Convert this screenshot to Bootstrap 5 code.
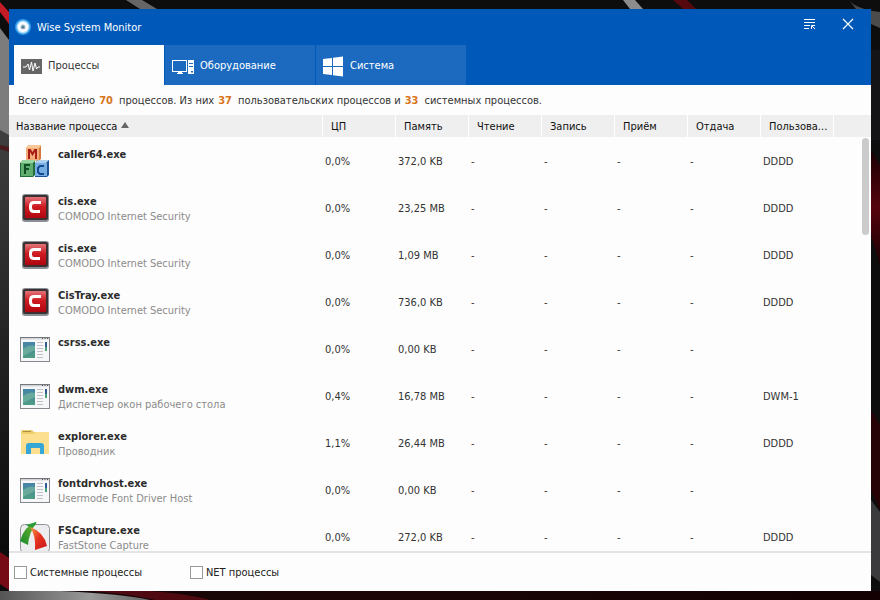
<!DOCTYPE html>
<html lang="ru">
<head>
<meta charset="utf-8">
<meta name="viewport" content="width=device-width, initial-scale=1">
<title>Wise System Monitor</title>
<link href="https://cdn.jsdelivr.net/npm/bootstrap@5.3.0/dist/css/bootstrap.min.css" rel="stylesheet">
<style>
  body { font: 11px/15px "DejaVu Sans Condensed", "Noto Sans", sans-serif; color: #333; background: #0c0c0d; }
  .backdrop { z-index: -1; }
  .desk { padding: 9px; }
  .win { background: #fdfdfd; }
  .titlebar { background: #0059b8; color: #fff; }
  .caption { height: 36px; padding: 0 15px 0 6px; gap: 6px; }
  .caption h1 { font-size: 11px; line-height: 15px; }
  .tool { border: 0; background: none; color: #fff; padding: 0 0 6px; width: 16px; line-height: 0; }
  .tabs { padding-left: 5px; gap: 1px; }
  .tab { width: 150px; height: 40px; border: 0; padding: 0 7px; gap: 6px; background: #1b6abf; color: #fff; text-align: left; }
  .tab.active { background: #fdfdfd; color: #333; }
  .tab svg { margin-top: 3px; }
  .summary { height: 30px; padding: 0 9px; }
  .summary b { color: #d8751c; margin: 0 2px 0 4px; }
  .listing { flex: 1 1 0; min-height: 0; }
  .proc { table-layout: fixed; border-collapse: separate; border-spacing: 0; }
  .proc th { height: 22px; padding: 0 6px 0 8px; background: #efefef; color: #111; font-weight: 400; border-right: 1px solid #fff; }
  .proc th:last-child { border-right: 0; }
  .proc .first { padding-left: 7px; }
  .c-val { width: 73px; }
  .c-end { width: 37px; }
  .proc td { height: 47px; padding: 1px 2px 0; vertical-align: middle; white-space: nowrap; }
  .proc td.name { padding: 0 0 0 11px; vertical-align: top; }
  .entry { gap: 7px; }
  .entry svg { margin-top: 7px; flex: none; }
  .entry .labels { padding-top: 10px; }
  .entry b { color: #2b2b2b; font-size: 11px; }
  .entry span { color: #8b8b8b; }
  .thumb { top: 23px; right: 2px; width: 7px; height: 97px; border-radius: 4px; background: #cbcbcb; }
  .options { border-top: 2px solid #e4e4e4; height: 40px; padding: 0 5px; gap: 48px; color: #222; }
  .options label { padding-left: 3px; }
  .options .form-check-input { width: 13px; height: 13px; margin: 0; border: 1px solid #999; border-radius: 0; background-color: #fff; }
  .options .form-check-input:checked { background-color: #0059b8; }
</style>
<script src="https://cdn.jsdelivr.net/npm/bootstrap@5.3.0/dist/js/bootstrap.bundle.min.js"></script>
</head>
<body>
<svg class="backdrop position-fixed top-0 start-0 w-100 h-100" viewBox="0 0 880 600" preserveAspectRatio="none" aria-hidden="true">
  <defs>
    <linearGradient id="gl" x1="0" y1="0" x2="0" y2="1"><stop offset="0" stop-color="#404040"/><stop offset=".5" stop-color="#242424"/><stop offset="1" stop-color="#0b0b0b"/></linearGradient>
    <linearGradient id="gr" x1="0" y1="0" x2="0" y2="1"><stop offset="0" stop-color="#180003"/><stop offset=".5" stop-color="#55040d"/><stop offset="1" stop-color="#180003"/></linearGradient>
    <linearGradient id="gw" x1="0" y1="0" x2="1" y2="0"><stop offset="0" stop-color="#555"/><stop offset=".6" stop-color="#999"/><stop offset="1" stop-color="#666"/></linearGradient>
    <linearGradient id="gb" x1="0" y1="0" x2="1" y2="0"><stop offset="0" stop-color="#150406"/><stop offset=".4" stop-color="#1c0507"/><stop offset="1" stop-color="#120002"/></linearGradient>
    <linearGradient id="red" x1="0" y1="0" x2="0" y2="1"><stop offset="0" stop-color="#e2757a"/><stop offset=".45" stop-color="#cf1b22"/><stop offset="1" stop-color="#b00610"/></linearGradient>
    <linearGradient id="pic" x1="0" y1="0" x2="0" y2="1"><stop offset="0" stop-color="#4683ab"/><stop offset="1" stop-color="#4f9d82"/></linearGradient>
    <linearGradient id="green" x1="1" y1="0" x2="0" y2="1"><stop offset="0" stop-color="#7cb52c"/><stop offset="1" stop-color="#138a2c"/></linearGradient>
    <linearGradient id="flame" x1="0" y1="0" x2="1" y2="1"><stop offset="0" stop-color="#f79a4a"/><stop offset=".5" stop-color="#e5301e"/><stop offset="1" stop-color="#c7161b"/></linearGradient>
    <symbol id="i-mfc" viewBox="0 0 31 34">
      <path d="M6 4L9 1H21L21 15L18 17H6Z" fill="#d5763c"/><path d="M6 4L9 1H22L19 4Z" fill="#f7c797"/><rect x="6" y="4" width="13" height="13" fill="#f3ad78"/>
      <path d="M9 15V6H10L12.500 10L15 6H16V15" fill="none" stroke="#a71c17" stroke-width="2"/>
      <path d="M0 19L3 16H15V31L13 33H0Z" fill="#236c3c"/><path d="M0 19L3 16H16L13 19Z" fill="#97d5a0"/><rect x="1" y="19" width="12" height="13" fill="#5fae70"/>
      <path d="M5 30V21H10M5 25H9" fill="none" stroke="#114e25" stroke-width="2"/>
      <path d="M15 19L18 16H29V31L27 33H15Z" fill="#1d4f91"/><path d="M15 19L18 16H29L26 19Z" fill="#afd1f0"/><rect x="15" y="19" width="12" height="13" fill="#77aee2"/>
      <path d="M24 22H20L18 24V28L20 30H24" fill="none" stroke="#134a91" stroke-width="2"/>
    </symbol>
    <symbol id="i-comodo" viewBox="0 0 31 34">
      <rect x="2" y="3" width="27" height="28" rx="3" fill="#8b9097"/><rect x="3" y="4" width="25" height="25" rx="2" fill="#3c3032"/>
      <rect x="5" y="6" width="21" height="21" rx="1" fill="url(#red)"/>
      <path d="M21 11.500H14Q10.500 11.500 10.500 15V16.500Q10.500 20.500 14 20.500H20" fill="none" stroke="#fff" stroke-width="3"/>
    </symbol>
    <symbol id="i-app" viewBox="0 0 31 34">
      <rect x=".5" y="5.500" width="29" height="24" fill="#f6f7f8" stroke="#85888d"/><path d="M1 6.500H29" stroke="#d3d5d9" stroke-width="2"/><path d="M0 5.500H30" stroke="#74777c"/>
      <path d="M22 6.500H28" stroke="#555" stroke-dasharray="1 1.500"/>
      <rect x="3" y="10" width="12" height="16" fill="url(#pic)"/><path d="M3 17Q9 12 15 14V18Q9 21 3 24Z" fill="#76b5a0" opacity=".7"/>
      <path d="M17 10.500H23M17 13.500H23M17 16.500H23M17 19.500H23M17 22.500H23M17 25.500H23" stroke="#c3bfc8"/>
      <path d="M26 10V19" stroke="#2f5d93" stroke-width="2"/><path d="M26 15V19" stroke="#45a07b" stroke-width="2"/>
    </symbol>
    <symbol id="i-folder" viewBox="0 0 31 34">
      <path d="M1 5Q1 4 2 4H12L14 6H29V28H1Z" fill="#efce6c"/><path d="M1 8H14L16 6H29V28H1Z" fill="#fce090"/><path d="M3 5.500H11" stroke="#a9924f"/>
      <path d="M6 28V20Q6 17 9 17H21Q24 17 24 20V28H20V22H11V28Z" fill="#35a6d5"/>
    </symbol>
    <symbol id="i-fs" viewBox="0 0 31 34">
      <rect x=".5" y="4.500" width="29" height="28" rx="4" fill="#ededf0" stroke="#8f9297"/>
      <path d="M17 2Q4 6 0 21L8 25Q9 12 17 2Z" fill="url(#green)"/><path d="M10 7Q16 15 15 30L27 26Q24 12 10 7Z" fill="url(#flame)"/>
      <path d="M6 5Q10 8 13 7Q17 4 16 2Z" fill="#2d9b38"/>
    </symbol>
  </defs>
  <rect width="880" height="600" fill="#0d0d0e"/>
  <rect y="120" width="9" height="430" fill="url(#gl)"/>
  <path d="M0 28L9 40V135L0 130Z" fill="#7c7c7c"/>
  <path d="M0 2L9 12V24L0 12Z" fill="#c51b24"/>
  <path d="M0 145L9 147V152L0 149Z" fill="#4a1a1c"/>
  <path d="M126 0H142L157 9H140Z" fill="#666"/>
  <path d="M623 0H635L643 9H630Z" fill="#8c8c8c"/>
  <path d="M673 0H687L696 9H683Z" fill="#56080f"/>
  <path d="M849 0Q856 9 880 12V28L871 24V9H856Z" fill="#4b4b4b"/>
  <rect x="871" y="50" width="9" height="90" fill="#141416"/>
  <path d="M871 150L880 165V265L871 235Z" fill="url(#gr)"/>
  <path d="M871 410L880 425V510L871 490Z" fill="#260206"/>
  <path d="M871 500L880 512V582L871 575Z" fill="#3b3b3d"/>
  <rect y="591" width="880" height="9" fill="url(#gb)"/>
  <path d="M0 552L9 558V590L0 584Z" fill="#760b16"/>
  <path d="M0 591H60Q125 594 150 600H0Z" fill="url(#gw)"/>
  <path d="M90 591H150Q190 594 210 600H155Q130 594 90 591Z" fill="#4e0a10"/>
</svg>

<div class="desk vh-100">
  <main class="win d-flex flex-column h-100">
    <header class="titlebar flex-shrink-0">
      <div class="caption d-flex align-items-center">
        <svg width="16" height="16" viewBox="0 0 16 16" aria-hidden="true"><circle cx="8" cy="8" r="8" fill="#2f9be6"/><circle cx="8" cy="8" r="6.500" fill="#b5dffa"/><circle cx="8" cy="8" r="5" fill="#fff"/><circle cx="8" cy="8" r="2.500" fill="#9bb5c4"/><path d="M8 6.500L9.500 9H6.500Z" fill="#476d86"/></svg>
        <h1 class="mb-0 fw-normal me-auto">Wise System Monitor</h1>
        <button type="button" class="tool me-3" aria-label="Меню"><svg width="14" height="14" viewBox="0 0 14 14" fill="none" stroke="#fff"><path d="M1 2.500H12M1 5.500H12M1 8.500H7M1 11.500H6"/><path d="M8.500 12V8.500H12M9 9L12 12"/></svg></button>
        <button type="button" class="tool" aria-label="Закрыть"><svg width="14" height="14" viewBox="0 0 14 14" fill="none" stroke="#fff" stroke-width="1.200"><path d="M2 2L12 12M12 2L2 12"/></svg></button>
      </div>
      <nav class="tabs d-flex" role="tablist">
        <button type="button" role="tab" aria-selected="true" class="tab active d-flex align-items-center">
          <svg width="21" height="15" viewBox="0 0 21 15" aria-hidden="true"><rect width="21" height="15" fill="#666"/><path d="M2 8H5L7 5L8.500 11L10.500 3L12 12L14 4L15.500 10L17 8H19" fill="none" stroke="#fff"/></svg>
          Процессы</button>
        <button type="button" role="tab" aria-selected="false" class="tab d-flex align-items-center">
          <svg width="22" height="16" viewBox="0 0 22 16" fill="#fff" aria-hidden="true"><path fill-rule="evenodd" d="M0 1H15V13H0ZM1 2V12H14V2Z"/><path d="M6 13H10V14H11V15H5V14H6Z"/><path fill-rule="evenodd" d="M16 1H22V15H16ZM17 5H21V4H17ZM17 8H21V7H17ZM19 12V13.500H21V12Z"/></svg>
          Оборудование</button>
        <button type="button" role="tab" aria-selected="false" class="tab d-flex align-items-center">
          <svg width="21" height="21" viewBox="0 0 21 21" fill="#fff" aria-hidden="true"><path d="M0 3L9 2V10H0ZM10 1.800L20 .5V10H10ZM0 11H9V19L0 18ZM10 11H20V20.500L10 19.200Z"/></svg>
          Система</button>
      </nav>
    </header>

    <p class="summary d-flex align-items-center mb-0 flex-shrink-0">Всего найдено <b>70</b> <span class="ms-1">процессов. Из них</span> <b>37</b> <span class="ms-1">пользовательских процессов и</span> <b>33</b> <span class="ms-1">системных процессов.</span></p>

    <section class="listing position-relative overflow-hidden">
      <table class="proc w-100">
        <colgroup><col><col class="c-val"><col class="c-val"><col class="c-val"><col class="c-val"><col class="c-val"><col class="c-val"><col class="c-val"><col class="c-end"></colgroup>
        <thead><tr>
          <th class="first" scope="col" aria-sort="ascending">Название процесса <svg width="8" height="6" viewBox="0 0 8 6" class="mb-1" aria-hidden="true"><path d="M4 0L8 6H0Z" fill="#666"/></svg></th>
          <th scope="col">ЦП</th><th scope="col">Память</th><th scope="col">Чтение</th><th scope="col">Запись</th><th scope="col">Приём</th><th scope="col">Отдача</th><th scope="col">Пользова...</th><th></th>
        </tr></thead>
        <tbody id="rows"></tbody>
      </table>
      <div class="thumb position-absolute"></div>
    </section>

    <footer class="options d-flex align-items-center flex-shrink-0">
      <div class="d-flex align-items-center"><input class="form-check-input" type="checkbox" id="sys"><label for="sys">Системные процессы</label></div>
      <div class="d-flex align-items-center"><input class="form-check-input" type="checkbox" id="net"><label for="net">NET процессы</label></div>
    </footer>
  </main>
</div>
<script>
  const processes = [
    ["mfc", "caller64.exe", "", "0,0%", "372,0 KB", "DDDD"],
    ["comodo", "cis.exe", "COMODO Internet Security", "0,0%", "23,25 MB", "DDDD"],
    ["comodo", "cis.exe", "COMODO Internet Security", "0,0%", "1,09 MB", "DDDD"],
    ["comodo", "CisTray.exe", "COMODO Internet Security", "0,0%", "736,0 KB", "DDDD"],
    ["app", "csrss.exe", "", "0,0%", "0,00 KB", ""],
    ["app", "dwm.exe", "Диспетчер окон рабочего стола", "0,4%", "16,78 MB", "DWM-1"],
    ["folder", "explorer.exe", "Проводник", "1,1%", "26,44 MB", "DDDD"],
    ["app", "fontdrvhost.exe", "Usermode Font Driver Host", "0,0%", "0,00 KB", ""],
    ["fs", "FSCapture.exe", "FastStone Capture", "0,0%", "272,0 KB", "DDDD"]
  ];
  document.getElementById("rows").innerHTML = processes.map(([icon, name, about, cpu, memory, user]) =>
    `<tr><td class="name"><div class="entry d-flex"><svg width="31" height="34" aria-hidden="true"><use href="#i-${icon}"/></svg>
     <div class="labels d-flex flex-column"><b>${name}</b><span>${about}</span></div></div></td>
     <td>${cpu}</td><td>${memory}</td><td>-</td><td>-</td><td>-</td><td>-</td><td>${user}</td><td></td></tr>`).join("");
</script>
</body>
</html>
